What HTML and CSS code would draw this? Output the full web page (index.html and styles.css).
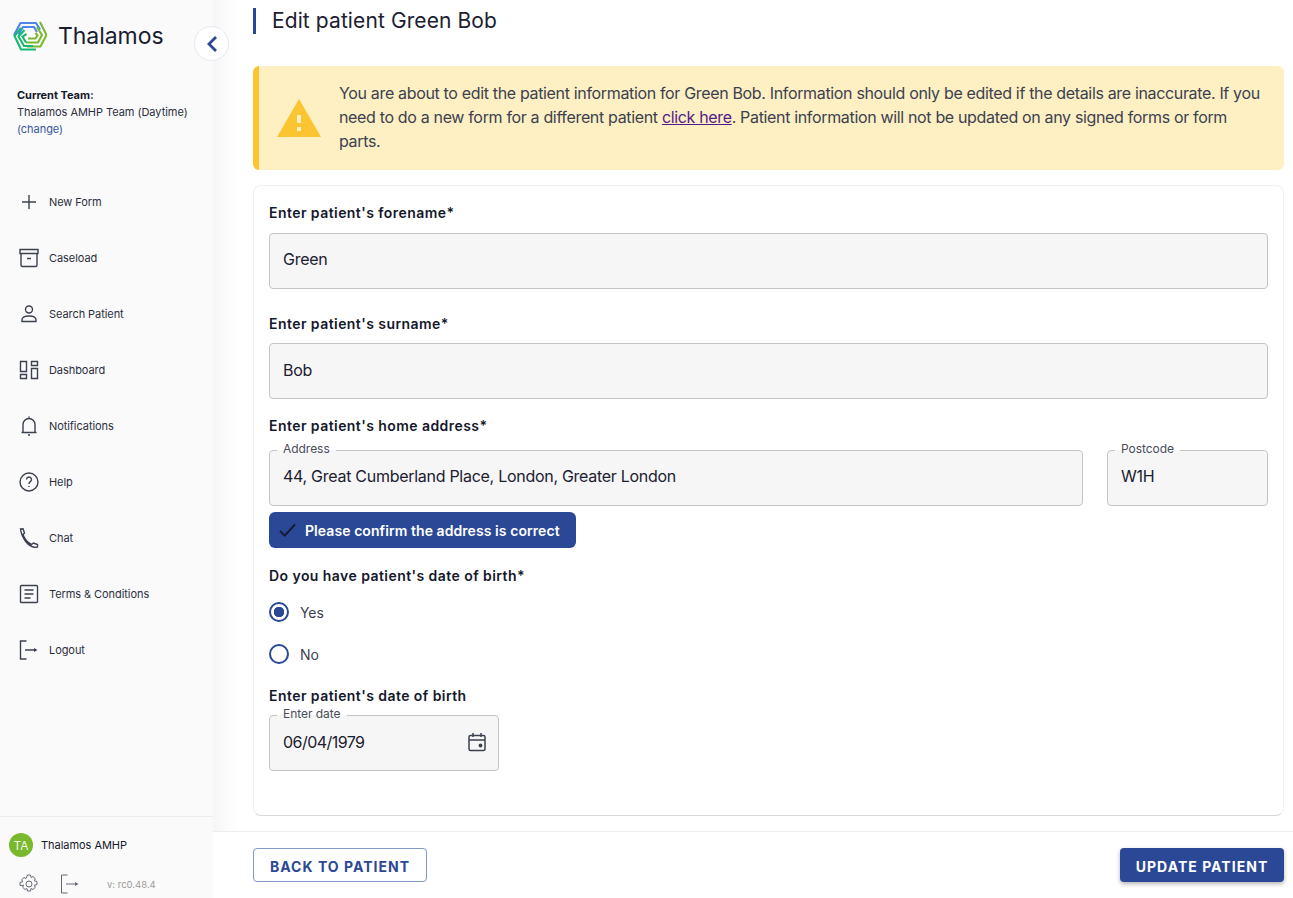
FILE: index.html
```html
<!DOCTYPE html>
<html lang="en">
<head>
<meta charset="utf-8">
<title>Edit patient</title>
<link rel="stylesheet" href="styles.css">
</head>
<body>
<div class="app">
  <aside class="sidebar">
    <div class="brand">
      <svg class="logo" viewBox="0 0 34 30" fill="none" stroke-width="2.100" stroke-linejoin="miter">
        <path d="M1 14 7.500 2H23l4 6.500" stroke="#4f86e8"/>
        <path d="M5.500 13.500 10 6h11l3 5" stroke="#4f86e8"/>
        <path d="M27 1l6.500 13-6 11.500H14" stroke="#7ab92f"/>
        <path d="M24 6l5 8-4 7.500H13" stroke="#7ab92f"/>
        <path d="M22.500 12l2 2.500-2 3H15" stroke="#7ab92f"/>
        <path d="M8 7 1.500 15 8 28.500h15" stroke="#17b873"/>
        <path d="M11.500 9 5.500 15.500l5.500 9.500h9" stroke="#17b873"/>
        <path d="M13.500 13 9.500 15.500l3.500 6" stroke="#17b873"/>
      </svg>
      <span class="brand-name">Thalamos</span>
    </div>
    <div class="team">
      <div class="team-label">Current Team:</div>
      <div class="team-name">Thalamos AMHP Team (Daytime)</div>
      <a class="team-change" href="#">(change)</a>
    </div>
    <nav class="nav">
      <a class="nav-item" href="#">
        <svg class="nav-icon" viewBox="0 0 20 20"><path d="M10 3v14M3 10h14"/></svg>New Form</a>
      <a class="nav-item" href="#">
        <svg class="nav-icon" viewBox="0 0 20 20"><path d="M1 1.500h18v4H1zM2 5.500v11.500a1.500 1.500 0 0 0 1.500 1.500h13a1.500 1.500 0 0 0 1.500-1.500V5.500M8 10.500h4"/></svg>Caseload</a>
      <a class="nav-item" href="#">
        <svg class="nav-icon" viewBox="0 0 20 20"><circle cx="10" cy="5.500" r="3.500"/><path d="M3 17.500v-1.500c0-2.500 3-4 7-4s7 1.500 7 4v1.500z"/></svg>Search Patient</a>
      <a class="nav-item" href="#">
        <svg class="nav-icon" viewBox="0 0 20 20"><path d="M1.500 1.500h6v10h-6zM12.500 1.500h6v4h-6zM1.500 14.500h6v4h-6zM12.500 8.500h6v10h-6z"/></svg>Dashboard</a>
      <a class="nav-item" href="#">
        <svg class="nav-icon" viewBox="0 0 20 20"><path d="M2.500 16.500h15M4 16.500V8.500a6 6 0 0 1 12 0v8M10 .5v2M9 19h2"/></svg>Notifications</a>
      <a class="nav-item" href="#">
        <svg class="nav-icon" viewBox="0 0 20 20"><circle cx="10" cy="10" r="9"/><path d="M7.500 7.500a2.500 2.500 0 1 1 3.800 2.200c-.9.600-1.300 1.100-1.300 2.300M10 14v1"/></svg>Help</a>
      <a class="nav-item" href="#">
        <svg class="nav-icon" viewBox="0 0 20 20"><path d="M1.500 1 4 .8 5.500 5 4 6.500c1.500 4.500 4.500 8 8.500 10l2-1.500 4 1.500v2.500l-2.500.5C9 18 3 11 1.500 1z"/></svg>Chat</a>
      <a class="nav-item" href="#">
        <svg class="nav-icon" viewBox="0 0 20 20"><path d="M2.500 1.500h15a1 1 0 0 1 1 1v15a1 1 0 0 1-1 1h-15a1 1 0 0 1-1-1v-15a1 1 0 0 1 1-1zM5.500 6h9M5.500 10h9M5.500 14h6"/></svg>Terms &amp; Conditions</a>
      <a class="nav-item" href="#">
        <svg class="nav-icon" viewBox="0 0 20 20"><path d="M7.500 1H1.500v18h6M6 10h11"/><path class="solid" d="M15 8l3.500 2-3.500 2z"/></svg>Logout</a>
    </nav>
    <div class="account">
      <div class="account-user">
        <span class="avatar">TA</span>
        <span class="account-name">Thalamos AMHP</span>
      </div>
      <div class="account-tools">
        <svg class="tool-icon" viewBox="0 0 20 20"><circle cx="10" cy="10" r="3"/><path d="M8.500 1h3l.5 2.500 2-1 2.300 2.200-1 2.100 2.700.7v3l-2.700.7 1 2.100-2.300 2.200-2-1-.5 2.500h-3l-.5-2.500-2 1-2.300-2.200 1-2.100L1 11.500v-3l2.700-.7-1-2.100L5 3.500l2 1z"/></svg>
        <svg class="tool-icon" viewBox="0 0 20 20"><path d="M7.500 1H1.500v18h6M6 10h11"/><path class="solid" d="M15 8l3.500 2-3.500 2z"/></svg>
        <span class="version">v: rc0.48.4</span>
      </div>
    </div>
  </aside>

  <button class="collapse" type="button" aria-label="Collapse menu">
    <svg viewBox="0 0 12 18" width="12" height="18"><path d="M10 2 3 9l7 7" fill="none" stroke="#2a4896" stroke-width="2.800"/></svg>
  </button>

  <main class="main">
    <div class="content">
      <h1 class="title">Edit patient Green Bob</h1>
      <div class="alert">
        <svg class="alert-icon" viewBox="0 0 44 38"><path d="M22 0 44 38H0z" fill="#fbc531"/><path d="M20 16h4v8h-4zM20 28h4v4h-4z" fill="#fef0c3"/></svg>
        <p class="alert-text">You are about to edit the patient information for Green Bob. Information should only be edited if the details are inaccurate. If you need to do a new form for a different patient <a href="#" class="alert-link">click here</a>. Patient information will not be updated on any signed forms or form parts.</p>
      </div>
      <form class="card">
        <label class="label">Enter patient's forename*</label>
        <div class="field"><span class="value">Green</span></div>
        <label class="label label-surname">Enter patient's surname*</label>
        <div class="field field-tight"><span class="value">Bob</span></div>
        <label class="label label-address">Enter patient's home address*</label>
        <div class="address-row">
          <div class="field field-grow"><span class="legend">Address</span><span class="value">44, Great Cumberland Place, London, Greater London</span></div>
          <div class="field field-postcode"><span class="legend">Postcode</span><span class="value">W1H</span></div>
        </div>
        <button class="confirm" type="button">
          <svg class="confirm-icon" viewBox="0 0 18 14"><path d="M1 8l5 5L17 1" fill="none" stroke="#14182b" stroke-width="1.900"/></svg>
          Please confirm the address is correct
        </button>
        <label class="label label-dob">Do you have patient's date of birth*</label>
        <div class="radio-group">
          <div class="radio-row"><span class="radio radio-on"></span>Yes</div>
          <div class="radio-row"><span class="radio"></span>No</div>
        </div>
        <label class="label label-date">Enter patient's date of birth</label>
        <div class="field field-date">
          <span class="legend">Enter date</span>
          <span class="value value-date">06/04/1979</span>
          <svg class="date-icon" viewBox="0 0 20 20" fill="none" stroke="#3c4150" stroke-width="1.500"><path d="M3.500 3.500h13a1.500 1.500 0 0 1 1.500 1.500v12a1.500 1.500 0 0 1-1.500 1.500h-13A1.500 1.500 0 0 1 2 17V5a1.500 1.500 0 0 1 1.500-1.500zM2 8h16M6 1v4M14 1v4"/><circle cx="13.500" cy="13.500" r="1.200" fill="#3c4150"/></svg>
        </div>
      </form>
    </div>
    <footer class="footer">
      <button class="btn btn-outline" type="button">BACK TO PATIENT</button>
      <button class="btn btn-solid" type="button">UPDATE PATIENT</button>
    </footer>
  </main>
</div>
</body>
</html>
```
FILE: styles.css
```css
* { box-sizing: border-box; }
html, body { margin: 0; height: 100%; }
body {
  font-family: Inter, "Liberation Sans", sans-serif;
  color: #14182b;
  background: #fff;
  overflow: hidden;
}
a { text-decoration: none; }
.app { display: flex; height: 898px; position: relative; }

.sidebar {
  width: 213px;
  flex: none;
  background: #fafafa;
  display: flex;
  flex-direction: column;
}
.brand { display: flex; gap: 11px; padding: 21px 0 0 13px; height: 87px; align-items: flex-start; }
.logo { width: 34px; height: 30px; flex: none; }
.brand-name { font-size: 23px; line-height: 30px; letter-spacing: -.05px; color: #1a1d30; }
.team { padding: 0 0 0 17px; font-size: 11px; line-height: 17px; height: 87px; letter-spacing: -.04px; }
.team-label { font-weight: 700; }
.team-name { color: #2b2f40; }
.team-change { color: #3a56a0; }
.nav { display: flex; flex-direction: column; }
.nav-item { display: flex; align-items: center; height: 56px; padding-left: 19px; gap: 10px; font-size: 11px; letter-spacing: -.07px; color: #2b2f40; }
.nav-icon, .tool-icon { width: 20px; height: 20px; fill: none; stroke: #3c4150; stroke-width: 1.400; flex: none; }
.nav-icon .solid, .tool-icon .solid { fill: #3c4150; stroke: none; }
.account { margin-top: auto; border-top: 1px solid #ececec; height: 82px; padding: 16px 0 0 9px; }
.account-user { display: flex; align-items: center; gap: 8px; }
.avatar { width: 24px; height: 24px; border-radius: 50%; background: #7ab82e; color: #f1f6e6; font-size: 12px; display: flex; align-items: center; justify-content: center; }
.account-name { font-size: 11px; letter-spacing: -.04px; color: #14182b; }
.account-tools { display: flex; align-items: center; margin-top: 17px; padding-left: 10px; }
.tool-icon { stroke: #666a75; stroke-width: 1; }
.tool-icon + .tool-icon { margin-left: 21px; }
.tool-icon .solid { fill: #666a75; }
.version { font-size: 9.500px; color: #9a9a9a; margin-left: 27px; }

.collapse {
  position: absolute;
  left: 194px;
  top: 26px;
  width: 35px;
  height: 35px;
  padding: 0;
  border-radius: 50%;
  border: 1px solid #e6e8f2;
  background: #fff;
  display: flex;
  align-items: center;
  justify-content: center;
  z-index: 2;
}

.main { flex: 1; min-width: 0; display: flex; flex-direction: column; }
.content {
  height: 831px;
  padding: 8px 9px 0 40px;
  background: linear-gradient(90deg, #f6f6f6 0, #fff 24px);
}
.title { margin: 0; height: 26px; border-left: 3px solid #2a4896; padding-left: 16px; font-size: 21px; line-height: 25px; letter-spacing: .1px; font-weight: 400; color: #1c2030; }
.alert {
  margin-top: 32px;
  height: 104px;
  background: #fef0c3;
  border-left: 6px solid #fbc531;
  border-radius: 6px;
  display: flex;
  align-items: center;
  padding: 0 16px 2px 18px;
  gap: 18px;
}
.alert-icon { width: 44px; height: 38px; flex: none; margin-top: 2px; }
.alert-text { margin: 0; font-size: 16px; line-height: 24px; color: #3c4150; letter-spacing: -.34px; }
.alert-link { color: #551a8b; text-decoration: underline; }
.card {
  margin-top: 15px;
  height: 631px;
  background: #fff;
  border: 1px solid #f0f0f0;
  border-bottom-color: #d8d8d8;
  border-radius: 8px;
  padding: 16px 15px 0;
}
.label { display: block; font-size: 14px; line-height: 22px; font-weight: 600; color: #14182b; letter-spacing: .44px; }
.label-surname { margin-top: 24px; }
.label-address { margin-top: 16px; }
.label-dob { margin-top: 17px; }
.label-date { margin-top: 10px; }
.field {
  position: relative;
  height: 56px;
  margin-top: 9px;
  background: #f6f6f6;
  border: 1px solid #c4c4c4;
  border-radius: 4px;
  display: flex;
  align-items: center;
  padding: 0 13px 4px;
}
.field-tight { margin-top: 8px; padding-bottom: 2px; }
.value { font-size: 16px; letter-spacing: -.28px; color: #1c2030; }
.value-date { letter-spacing: -.55px; }
.legend {
  position: absolute;
  left: 7px;
  top: -10px;
  padding: 0 6px;
  font-size: 12px;
  line-height: 16px;
  letter-spacing: -.04px;
  color: #4a4d5a;
  background: linear-gradient(#fff 56%, #f6f6f6 56%);
}
.address-row { display: flex; gap: 24px; margin-top: 13px; }
.address-row .field { margin-top: 0; }
.field-grow { flex: 1; }
.field-postcode { width: 161px; flex: none; }
.confirm {
  margin-top: 6px;
  width: 307px;
  height: 36px;
  background: #2a4896;
  border: 0;
  border-radius: 6px;
  color: #fff;
  font: 600 14px Inter, sans-serif;
  letter-spacing: .07px;
  display: flex;
  align-items: center;
  padding: 0 0 0 10px;
  gap: 9px;
}
.confirm-icon { width: 17px; height: 14px; flex: none; }
.radio-group { margin-top: 4px; }
.radio-row { display: flex; align-items: center; gap: 11px; height: 42px; font-size: 14px; letter-spacing: -.1px; color: #3c4150; }
.radio { width: 20px; height: 20px; border: 2px solid #2a4896; border-radius: 50%; flex: none; }
.radio-on { background: radial-gradient(circle, #2a4896 0 5px, transparent 5.500px); }
.field-date { width: 230px; margin-top: 8px; justify-content: space-between; padding-bottom: 2px; }
.date-icon { width: 20px; height: 20px; margin-right: -2px; }
.footer {
  height: 67px;
  border-top: 1px solid #ededed;
  padding: 16px 9px 0 40px;
  display: flex;
  justify-content: space-between;
  align-items: flex-start;
}
.btn { height: 34px; border-radius: 4px; font: 700 14px Inter, sans-serif; letter-spacing: 1.030px; padding: 2px 0 0; }
.btn-outline { width: 174px; background: #fff; border: 1px solid #8199c9; color: #2a4896; }
.btn-solid { width: 164px; background: #2a4896; border: 0; color: #fff; box-shadow: 0 2px 4px rgba(0,0,0,.3); }
```
